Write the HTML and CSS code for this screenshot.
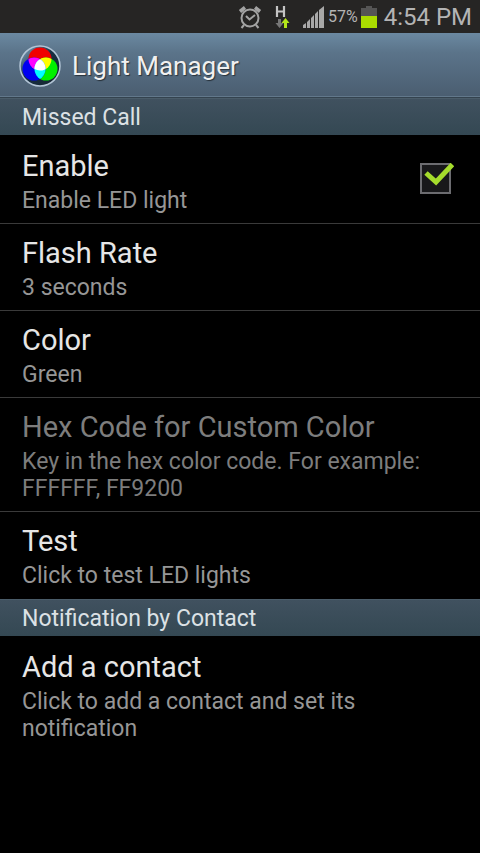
FILE: index.html
```html
<!DOCTYPE html>
<html lang="en">
<head>
<meta charset="utf-8">
<meta name="viewport" content="width=device-width, initial-scale=1">
<title>Light Manager</title>
<link rel="stylesheet" href="styles.css">
</head>
<body>
<div class="status">
  <svg class="alarm" width="24" height="24" viewBox="0 0 24 24" fill="none" stroke="#a3a3a3" stroke-width="2" aria-hidden="true">
    <circle cx="12" cy="13" r="8.5"/>
    <path d="M8 11l3.500 3.500L17 10"/>
    <path d="M2 6.500l5-4M17 2.500l5 4" stroke-width="3.600"/>
    <path d="M6 20l-2.500 3M18 20l2.500 3"/>
  </svg>
  <svg class="data" width="16" height="24" viewBox="0 0 16 24" aria-hidden="true">
    <path d="M3 1v11M10 1v11M3 6.500h7" stroke="#c4c4c4" stroke-width="2.200" fill="none"/>
    <path d="M4 14h3v4h2.500l-4 5-4-5H4z" fill="#777"/>
    <path d="M10 23v-5H7.500l4-5 4 5H13v5z" fill="#b4e61a"/>
  </svg>
  <svg class="signal" width="22" height="22" viewBox="0 0 22 22" fill="#a8a8a8" aria-hidden="true">
    <path d="M0 22v-3l3-2v5zM4 22v-6l3-3v9zM8 22v-10l3-3v13zM12 22v-14l3-3v17zM16 22v-18l5-4v22z"/>
  </svg>
  <span class="percent">57%</span>
  <svg class="battery" width="16" height="24" viewBox="0 0 16 24" aria-hidden="true">
    <path d="M0 3h5V1h6v2h5v9H0z" fill="#555"/>
    <path d="M0 11h16v12H0z" fill="#aadc00"/>
  </svg>
  <span class="clock">4:54 PM</span>
</div>
<header class="bar">
  <svg width="42" height="42" viewBox="0 0 42 42" aria-hidden="true">
    <defs>
      <linearGradient id="disc" x1="0" y1="0" x2="1" y2="1"><stop offset="0" stop-color="#8eb0cc"/><stop offset=".45" stop-color="#183044"/><stop offset="1" stop-color="#16242e"/></linearGradient>
      <clipPath id="r"><circle cx="21" cy="14" r="11.500"/></clipPath>
      <clipPath id="g"><circle cx="27" cy="24" r="11.500"/></clipPath>
      <clipPath id="rg" clip-path="url(#r)"><circle cx="27" cy="24" r="11.500"/></clipPath>
    </defs>
    <circle cx="21" cy="21" r="20" fill="url(#disc)" stroke="#b3c5d6" stroke-width="1.500"/>
    <circle cx="21" cy="14" r="11.500" fill="#f00000"/>
    <circle cx="27" cy="24" r="11.500" fill="#00f000"/>
    <circle cx="15" cy="24" r="11.500" fill="#0000f0"/>
    <circle cx="27" cy="24" r="11.500" fill="#ff0" clip-path="url(#r)"/>
    <circle cx="15" cy="24" r="11.500" fill="#f0f" clip-path="url(#r)"/>
    <circle cx="15" cy="24" r="11.500" fill="#0ff" clip-path="url(#g)"/>
    <circle cx="15" cy="24" r="11.500" fill="#fff" clip-path="url(#rg)"/>
  </svg>
  <h1>Light Manager</h1>
</header>
<main>
  <h2>Missed Call</h2>
  <ul>
    <li><label class="row toggle" for="enable">
      <span class="text"><span class="title">Enable</span><span class="summary">Enable LED light</span></span>
      <span class="check">
        <input type="checkbox" id="enable" checked>
        <svg width="34" height="32" viewBox="0 0 34 32" aria-hidden="true"><path d="M6 10l10 9L32.500 1.500" fill="none" stroke="#a5dc2c" stroke-width="5"/></svg>
      </span>
    </label></li>
    <li><button class="row"><span class="title">Flash Rate</span><span class="summary">3 seconds</span></button></li>
    <li><button class="row"><span class="title">Color</span><span class="summary">Green</span></button></li>
    <li><button class="row" disabled><span class="title">Hex Code for Custom Color</span><span class="summary">Key in the hex color code. For example: FFFFFF, FF9200</span></button></li>
    <li><button class="row"><span class="title">Test</span><span class="summary">Click to test LED lights</span></button></li>
  </ul>
  <h2>Notification by Contact</h2>
  <ul>
    <li><button class="row"><span class="title">Add a contact</span><span class="summary">Click to add a contact and set its notification</span></button></li>
  </ul>
</main>
</body>
</html>
```
FILE: styles.css
```css
* { box-sizing: border-box; }
body {
  margin: 0;
  background: #000;
  color: #e6e6e6;
  font-family: Roboto, "Liberation Sans", sans-serif;
}
.status {
  display: flex;
  align-items: center;
  justify-content: flex-end;
  height: 33px;
  padding-right: 8px;
  background: #262524;
  color: #b4b4b4;
}
.alarm { margin-right: 12px; }
.data { margin-right: 13px; }
.signal { margin-right: 3px; }
.percent { font-size: 16px; margin-right: 3px; }
.battery { margin-right: 7px; }
.clock { font-size: 24px; }
.bar {
  display: flex;
  align-items: center;
  gap: 11px;
  height: 65px;
  padding: 1px 19px 0;
  background: linear-gradient(#6b89a1, #5b748a 30%, #4a5d70);
  border-bottom: 1px solid #34434f;
  box-shadow: inset 0 -1px #62788b;
}
h1 {
  margin: 0;
  font-size: 26px;
  font-weight: 400;
  line-height: 32px;
  color: #f0f0f0;
  text-shadow: 1px 1px 1px #0008;
}
h2 {
  margin: 0;
  padding: 2px 22px 0;
  font-size: 23px;
  font-weight: 400;
  line-height: 34px;
  color: #dce1e5;
  background: linear-gradient(#40515f, #344853);
  border-top: 1px solid #4a5c69;
}
ul { margin: 0; padding: 2px 0 1px; list-style: none; }
li + li { border-top: 1px solid #3a3a3a; }
.row {
  display: block;
  width: 100%;
  margin: 0;
  padding: 12px 22px 9px;
  border: 0;
  background: none;
  color: inherit;
  font: inherit;
  text-align: left;
}
.toggle { display: flex; align-items: center; justify-content: space-between; }
.title, .summary { display: block; }
.title { font-size: 29px; line-height: 35px; }
.summary { margin-top: 3px; font-size: 23px; line-height: 27px; color: #969696; }
.row:disabled .title, .row:disabled .summary { color: #7d7d7d; }
.check { position: relative; display: flex; margin: 0 7px 6px 0; }
.check input {
  appearance: none;
  width: 31px;
  height: 31px;
  margin: 0;
  border: 2px solid #6c6c70;
  background: #18181a;
}
.check svg { position: absolute; left: 0; top: 0; display: none; pointer-events: none; }
.check input:checked + svg { display: block; }
```
